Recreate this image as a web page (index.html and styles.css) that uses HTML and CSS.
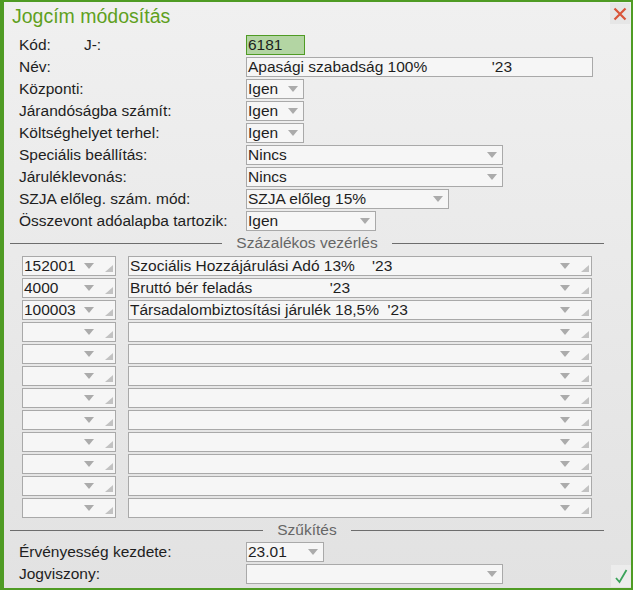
FILE: index.html
```html
<!DOCTYPE html>
<html lang="hu">
<head>
<meta charset="utf-8">
<title>Jogcím módosítás</title>
<link rel="stylesheet" href="styles.css">
</head>
<body>
<div class="window">
  <div class="titlebar"><span class="title">Jogcím módosítás</span></div>
  <button class="close" aria-label="Bezárás">
    <svg width="14" height="14" viewBox="0 0 14 14"><path d="M1.5 1.5 L12.5 12.5 M12.5 1.5 L1.5 12.5" stroke="#d9553a" stroke-width="2.2" fill="none"/></svg>
  </button>

  <div class="form">
    <div class="label"><span>Kód:</span><span class="sub">J-:</span></div>
    <div class="field code w59">6181</div>
    <div class="label">Név:</div>
    <div class="field w347 pre">Apasági szabadság 100%               '23</div>
    <div class="label">Központi:</div>
    <div class="field w58">Igen<span class="arrow"></span></div>
    <div class="label">Járandóságba számít:</div>
    <div class="field w58">Igen<span class="arrow"></span></div>
    <div class="label">Költséghelyet terhel:</div>
    <div class="field w58">Igen<span class="arrow"></span></div>
    <div class="label">Speciális beállítás:</div>
    <div class="field w257">Nincs<span class="arrow"></span></div>
    <div class="label">Járuléklevonás:</div>
    <div class="field w257">Nincs<span class="arrow"></span></div>
    <div class="label">SZJA előleg. szám. mód:</div>
    <div class="field w203">SZJA előleg 15%<span class="arrow"></span></div>
    <div class="label">Összevont adóalapba tartozik:</div>
    <div class="field w130">Igen<span class="arrow"></span></div>
  </div>

  <div class="sep sep1"><span class="line"></span><span class="sep-text">Százalékos vezérlés</span><span class="line"></span></div>

  <div class="grid">
    <div class="field cell-a">152001<span class="arrow"></span><span class="grip"></span></div>
    <div class="field cell-b pre">Szociális Hozzájárulási Adó 13%    '23<span class="arrow"></span><span class="grip"></span></div>
    <div class="field cell-a">4000<span class="arrow"></span><span class="grip"></span></div>
    <div class="field cell-b pre">Bruttó bér feladás                  '23<span class="arrow"></span><span class="grip"></span></div>
    <div class="field cell-a">100003<span class="arrow"></span><span class="grip"></span></div>
    <div class="field cell-b pre">Társadalombiztosítási járulék 18,5%  '23<span class="arrow"></span><span class="grip"></span></div>
    <div class="field cell-a"><span class="arrow"></span><span class="grip"></span></div>
    <div class="field cell-b"><span class="arrow"></span><span class="grip"></span></div>
    <div class="field cell-a"><span class="arrow"></span><span class="grip"></span></div>
    <div class="field cell-b"><span class="arrow"></span><span class="grip"></span></div>
    <div class="field cell-a"><span class="arrow"></span><span class="grip"></span></div>
    <div class="field cell-b"><span class="arrow"></span><span class="grip"></span></div>
    <div class="field cell-a"><span class="arrow"></span><span class="grip"></span></div>
    <div class="field cell-b"><span class="arrow"></span><span class="grip"></span></div>
    <div class="field cell-a"><span class="arrow"></span><span class="grip"></span></div>
    <div class="field cell-b"><span class="arrow"></span><span class="grip"></span></div>
    <div class="field cell-a"><span class="arrow"></span><span class="grip"></span></div>
    <div class="field cell-b"><span class="arrow"></span><span class="grip"></span></div>
    <div class="field cell-a"><span class="arrow"></span><span class="grip"></span></div>
    <div class="field cell-b"><span class="arrow"></span><span class="grip"></span></div>
    <div class="field cell-a"><span class="arrow"></span><span class="grip"></span></div>
    <div class="field cell-b"><span class="arrow"></span><span class="grip"></span></div>
    <div class="field cell-a"><span class="arrow"></span><span class="grip"></span></div>
    <div class="field cell-b"><span class="arrow"></span><span class="grip"></span></div>
  </div>

  <div class="sep sep2"><span class="line"></span><span class="sep-text">Szűkítés</span><span class="line"></span></div>

  <div class="form form2">
    <div class="label">Érvényesség kezdete:</div>
    <div class="field w78">23.01<span class="arrow"></span></div>
    <div class="label">Jogviszony:</div>
    <div class="field w257"><span class="arrow"></span></div>
  </div>

  <button class="ok" aria-label="OK">
    <svg width="14" height="16" viewBox="0 0 14 16"><path d="M2 10 L5.5 14 L12.5 2" stroke="#3aa35a" stroke-width="1.8" fill="none"/></svg>
  </button>
</div>
</body>
</html>
```

FILE: styles.css
```css
* { box-sizing: border-box; }

html, body {
  margin: 0;
  padding: 0;
}

body {
  width: 633px;
  height: 590px;
  font-family: "Liberation Sans", Arial, sans-serif;
  font-size: 15.5px;
  color: #1e1e1e;
  overflow: hidden;
}

.window {
  position: relative;
  width: 633px;
  height: 590px;
  border-style: solid;
  border-color: #4f9b24;
  border-width: 2px 2px 2px 4px;
  background: linear-gradient(#f0f0f0, #e2e2e2);
  display: flex;
  flex-direction: column;
}

.titlebar {
  height: 33px;
  padding-left: 8px;
  padding-top: 2px;
}

.title {
  font-size: 19.5px;
  color: #5fa01d;
  line-height: 24px;
}

.close {
  position: absolute;
  top: 1px;
  right: 1px;
  width: 20px;
  height: 21px;
  padding: 0;
  border: none;
  background: #e6e6e6;
  display: flex;
  align-items: center;
  justify-content: center;
}

.form {
  display: grid;
  grid-template-columns: 227px auto;
  grid-auto-rows: 20px;
  row-gap: 2px;
  padding-left: 15px;
  justify-items: start;
}

.label {
  display: flex;
  align-items: center;
  height: 20px;
  white-space: nowrap;
}

.label .sub {
  margin-left: 33px;
}

.field {
  display: flex;
  align-items: center;
  height: 20px;
  border: 1px solid #a9a9a9;
  background: #f6f6f6;
  padding-left: 1px;
  white-space: nowrap;
  overflow: hidden;
}

.pre { white-space: pre; }

.code {
  background: #b3d5a3;
  border-color: #4f9b24;
}

.w58 { width: 58px; }
.w59 { width: 59px; }
.w78 { width: 78px; }
.w130 { width: 130px; }
.w203 { width: 203px; }
.w257 { width: 257px; }
.w347 { width: 347px; }

.arrow {
  width: 0;
  height: 0;
  margin-left: auto;
  margin-right: 5px;
  border-left: 5px solid transparent;
  border-right: 5px solid transparent;
  border-top: 6px solid #ababab;
  flex: none;
}

.grip {
  flex: none;
  align-self: flex-end;
  width: 0;
  height: 0;
  margin-bottom: 3px;
  margin-right: 2px;
  border-left: 8px solid transparent;
  border-bottom: 7px solid #c2c2c2;
}

.cell-a .arrow,
.cell-b .arrow {
  margin-right: 11px;
}

.sep {
  display: flex;
  align-items: center;
  gap: 14px;
  height: 22px;
  margin-left: 6px;
  width: 594px;
}

.sep .line {
  flex: 1;
  height: 1px;
  background: #6d6d6d;
}

.sep-text {
  color: #666;
}

.sep1 { margin-top: 1px; }

.grid {
  display: grid;
  grid-template-columns: 94px 464px;
  column-gap: 12px;
  grid-auto-rows: 20px;
  row-gap: 2px;
  margin-top: 2px;
  padding-left: 18px;
}

.sep2 {
  margin-top: 1px;
}

.form2 {
  margin-top: 1px;
}

.ok {
  position: absolute;
  right: 0;
  bottom: 1px;
  width: 20px;
  height: 22px;
  padding: 0;
  border: none;
  background: #ececec;
  display: flex;
  align-items: center;
  justify-content: center;
}
```
